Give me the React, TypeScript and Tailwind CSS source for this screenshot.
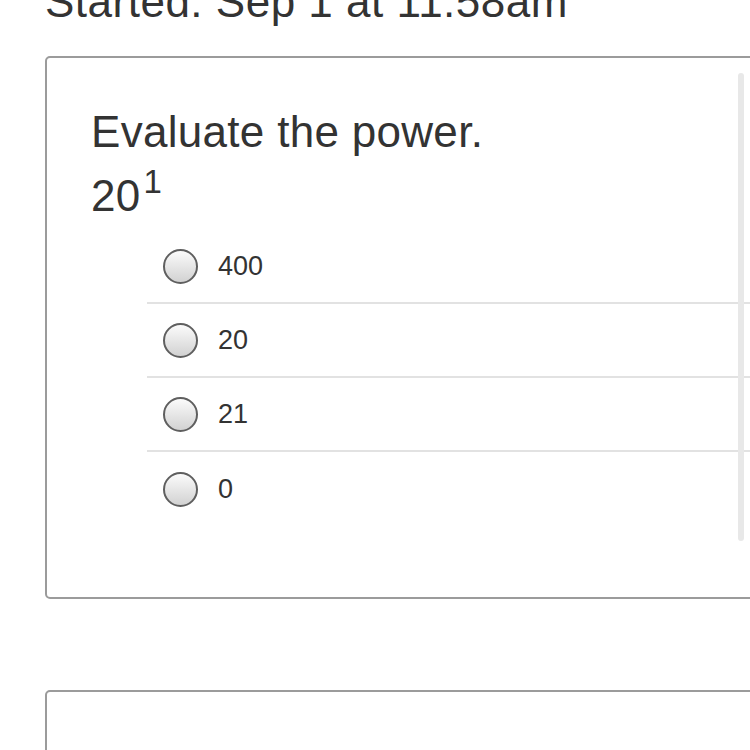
const options = ["400", "20", "21", "0"];

function Radio() {
  return (
    <span className="block h-[35px] w-[35px] shrink-0 rounded-full border-2 border-[#5f5f5f] bg-gradient-to-b from-[#fbfbfb] to-[#d2d2d2]" />
  );
}

export default function App() {
  return (
    <div className="h-[750px] w-[750px] overflow-hidden bg-white pl-[45px] font-['Liberation_Sans',Arial,sans-serif] text-[#333333]">
      <div className="-mt-[23px] whitespace-nowrap text-[44px] leading-[49px] tracking-[0.5px]">
        Started: Sep 1 at 11:58am
      </div>

      <div className="relative mt-[30px] w-[760px] rounded-[5px] border-2 border-[#9b9b9b] pt-[42px] pb-[71px] pl-[44px]">
        <div className="text-[44px] leading-[64px] tracking-[0.3px]">
          <div>Evaluate the power.</div>
          <div className="flex items-start">
            20
            <span className="ml-[3px] mt-[1px] text-[33px] leading-none">1</span>
          </div>
        </div>

        <div className="ml-[56px] mt-[2px]">
          {options.map((o, i) => (
            <div
              key={o}
              className={`flex h-[74px] items-center gap-[20px] pl-[16px] ${
                i < options.length - 1 ? "border-b-2 border-[#e2e2e2]" : ""
              }`}
            >
              <Radio />
              <span className="text-[27px] leading-none">{o}</span>
            </div>
          ))}
        </div>

        <div className="absolute left-[691px] top-[15px] h-[468px] w-[6px] rounded-full bg-[#e8e8e8]" />
      </div>

      <div className="mt-[91px] h-[200px] w-[760px] rounded-[5px] border-2 border-[#9b9b9b]" />
    </div>
  );
}
